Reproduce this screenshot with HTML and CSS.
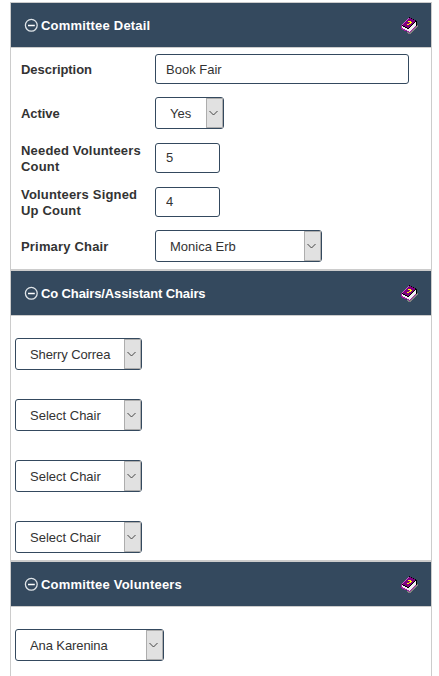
FILE: index.html
```html
<!DOCTYPE html>
<html lang="en">
  <head>
    <meta charset="UTF-8" />
    <meta name="viewport" content="width=device-width, initial-scale=1.0" />
    <title>Committee</title>
    <link rel="stylesheet" href="styles.css">
  </head>
  <body>
    <svg class="symbols">
      <symbol id="minus" viewBox="0 0 14 14">
        <circle cx="7.3" cy="7.3" r="5.9" fill="none" stroke="#dfe4e8" stroke-width="1.3" />
        <path d="M4 7.5h6.8" stroke="#fff" stroke-width="1.5" />
      </symbol>
      <symbol id="book" viewBox="0 0 17 17">
        <g shape-rendering="crispEdges">
          <path d="M16 6l1 3-7 8H8l-3-2z" fill="#808080" />
          <path d="M8 0l8 4v4l-7 8-9-4V8z" fill="#000" />
          <path d="M0 8h1v3l8 4v1l-9-4zM9 15l6-7v1l-6 7z" fill="#a020a0" />
          <path d="M1 9l6 3 8-7v3l-6 7-8-4z" fill="#f0f0f0" />
          <path d="M8 0l7 4v1l-8 7-6-3V8z" fill="#000" />
          <path d="M8 0.5l6.500 3.500-7.500 7-6-3z" fill="#800080" />
          <path d="M7 1h1v1h-1v1h-1v1h-1v1h-1v1h-1v1h-1v1h-1v-1h1v-1h1v-1h1v-1h1v-1h1v-1h1z" fill="#c060c0" />
          <path d="M7 4h3v1h1v1h-1v1h-2v-1h1v-1h-2zM6 7h2v1h-2z" fill="#ff0" />
        </g>
      </symbol>
    </svg>

    <div class="panel detail">
      <div class="heading">
        <svg class="toggle"><use href="#minus" /></svg>
        <span>Committee Detail</span>
        <svg class="help"><use href="#book" /></svg>
      </div>
      <div class="form">
        <div class="row first">
          <label for="description">Description</label>
          <input type="text" class="field" id="description" value="Book Fair" />
        </div>
        <div class="row second">
          <label for="active">Active</label>
          <div class="select yesno">
            <select id="active"><option>Yes</option><option>No</option></select>
            <svg class="arrow" viewBox="0 0 9 6"><path d="M0.5 1l4 4 4-4" /></svg>
          </div>
        </div>
        <div class="row">
          <label for="needed">Needed Volunteers Count</label>
          <input type="text" class="field count" id="needed" value="5" />
        </div>
        <div class="row">
          <label for="signed">Volunteers Signed Up Count</label>
          <input type="text" class="field count" id="signed" value="4" />
        </div>
        <div class="row">
          <label for="primary">Primary Chair</label>
          <div class="select primary">
            <select id="primary"><option>Monica Erb</option></select>
            <svg class="arrow" viewBox="0 0 9 6"><path d="M0.5 1l4 4 4-4" /></svg>
          </div>
        </div>
      </div>
    </div>

    <div class="panel chairs">
      <div class="heading">
        <svg class="toggle"><use href="#minus" /></svg>
        <span>Co Chairs/Assistant Chairs</span>
        <svg class="help"><use href="#book" /></svg>
      </div>
      <div class="list">
        <div class="select">
          <select class="selected"><option>Sherry Correa</option></select>
          <svg class="arrow" viewBox="0 0 9 6"><path d="M0.5 1l4 4 4-4" /></svg>
        </div>
        <div class="select">
          <select><option>Select Chair</option></select>
          <svg class="arrow" viewBox="0 0 9 6"><path d="M0.5 1l4 4 4-4" /></svg>
        </div>
        <div class="select">
          <select><option>Select Chair</option></select>
          <svg class="arrow" viewBox="0 0 9 6"><path d="M0.5 1l4 4 4-4" /></svg>
        </div>
        <div class="select">
          <select><option>Select Chair</option></select>
          <svg class="arrow" viewBox="0 0 9 6"><path d="M0.5 1l4 4 4-4" /></svg>
        </div>
      </div>
    </div>

    <div class="panel volunteers">
      <div class="heading">
        <svg class="toggle"><use href="#minus" /></svg>
        <span>Committee Volunteers</span>
        <svg class="help"><use href="#book" /></svg>
      </div>
      <div class="list">
        <div class="select wide">
          <select class="selected"><option>Ana Karenina</option></select>
          <svg class="arrow" viewBox="0 0 9 6"><path d="M0.5 1l4 4 4-4" /></svg>
        </div>
      </div>
    </div>
  </body>
</html>
```
FILE: styles.css
```css
* {
  box-sizing: border-box;
}
body {
  margin: 0;
  padding: 2px 7px 0 10px;
  background-color: #fff;
  color: #333;
  font-family: "Liberation Sans", Arial, sans-serif;
  font-size: 13px;
}
.symbols {
  display: none;
}
.panel {
  border: 1px solid #ccc;
}
.detail {
  height: 268px;
}
.chairs {
  height: 291px;
}
.volunteers {
  height: 115px;
  border-bottom: 0;
}
.heading {
  display: flex;
  align-items: center;
  height: 45px;
  padding: 0 13px;
  border-bottom: 1px solid #ccc;
  background-color: #34495e;
  background-clip: padding-box;
  color: #fff;
  font-weight: bold;
  letter-spacing: 0.2px;
}
.chairs .heading {
  letter-spacing: -0.12px;
}
.toggle {
  width: 14px;
  height: 14px;
  margin-right: 3px;
}
.help {
  width: 17px;
  height: 17px;
  margin-left: auto;
}
.row {
  display: flex;
  align-items: center;
  height: 44px;
  padding-left: 10px;
}
.first {
  height: 42px;
}
.second {
  height: 46px;
}
label {
  width: 134px;
  padding: 2px 8px 0 0;
  font-weight: bold;
  line-height: 16px;
  letter-spacing: 0.18px;
}
.first label,
.second label {
  letter-spacing: -0.05px;
}
.field {
  width: 254px;
  height: 30px;
  padding: 0 10px;
  border: 1px solid #34495e;
  border-radius: 3px;
  color: #333;
  font: inherit;
}
.count {
  width: 65px;
  padding-bottom: 2px;
}
.select {
  display: flex;
  align-items: center;
  position: relative;
  width: 127px;
  height: 32px;
  border: 1px solid #34495e;
  border-radius: 3px;
}
.select select {
  appearance: none;
  width: 100%;
  height: 30px;
  padding: 0 17px 0 14px;
  border: 0;
  background: none;
  color: #333;
  font: inherit;
}
.select .selected {
  letter-spacing: -0.1px;
}
.arrow {
  position: absolute;
  top: 0;
  right: 0;
  width: 17px;
  height: 30px;
  padding: 0 4px 0 2px;
  border: 1px solid #adadad;
  background-color: #e1e1e1;
  pointer-events: none;
}
.arrow path {
  fill: none;
  stroke: #444;
  stroke-width: 1;
}
.yesno {
  width: 69px;
}
.primary {
  width: 167px;
}
.list {
  display: flex;
  flex-direction: column;
  gap: 29px;
  padding: 22px 4px 0;
}
.wide {
  width: 149px;
}
```
